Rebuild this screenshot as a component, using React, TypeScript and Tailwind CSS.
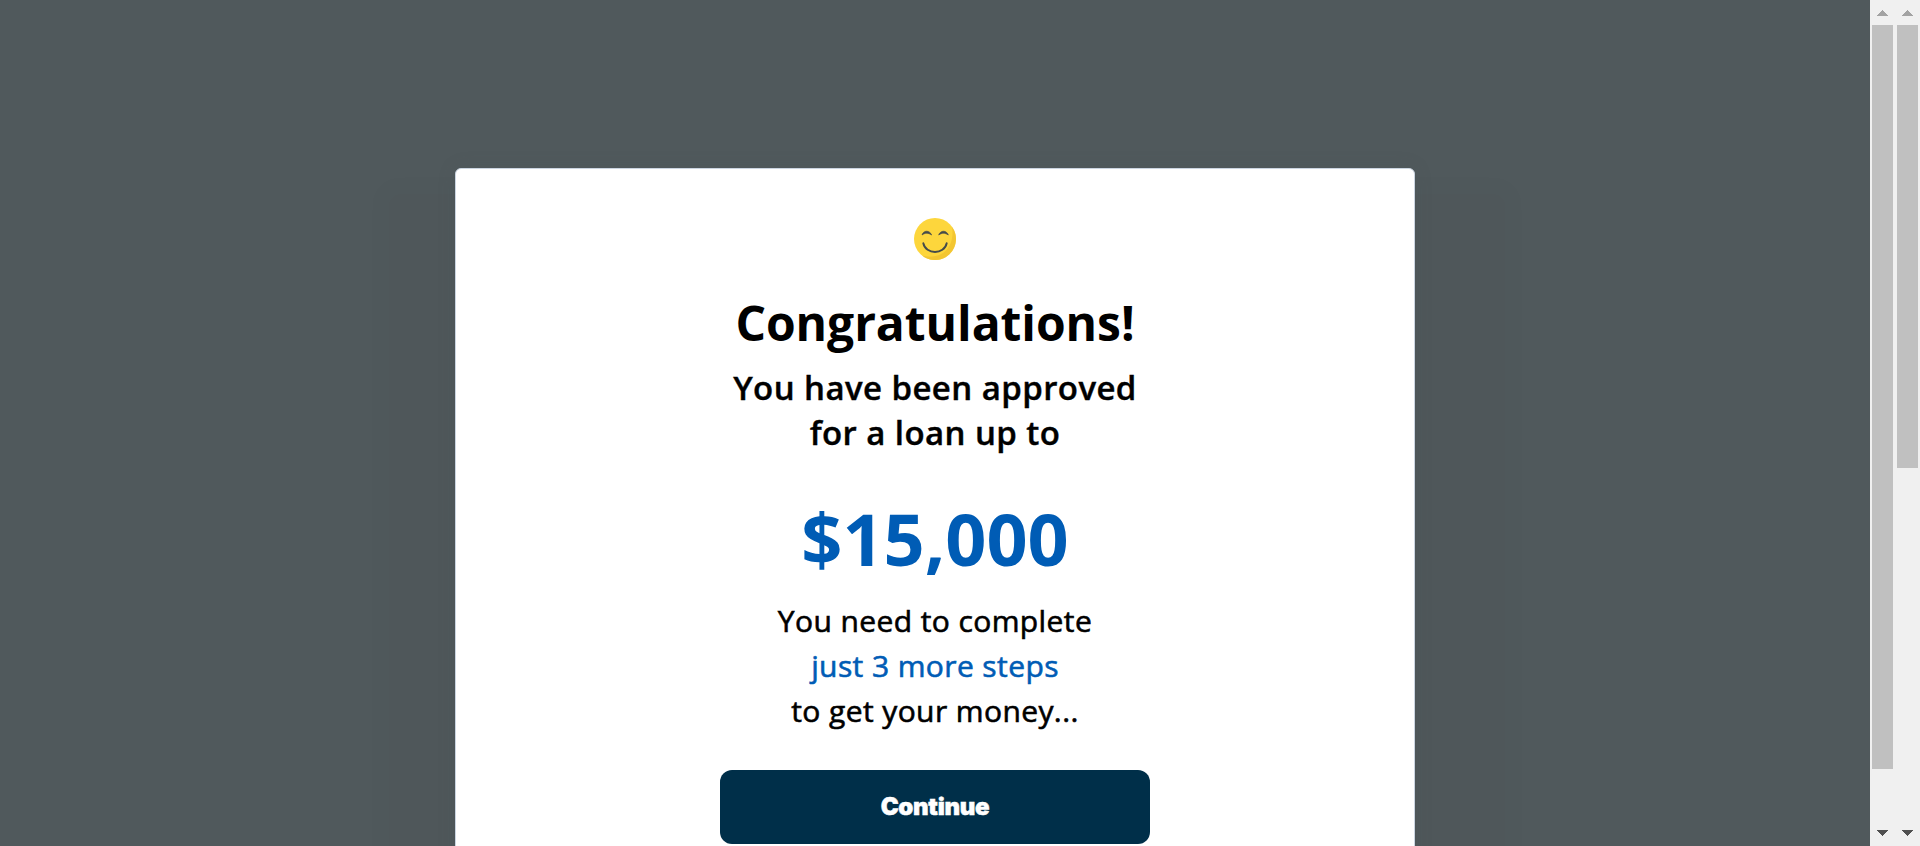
import type { ReactNode } from "react";

function Smile() {
  return (
    <svg className="h-[42px] w-[42px]" viewBox="0 0 42 42" fill="none">
      <circle cx="21" cy="21" r="21" fill="#fdd63c" />
      <path d="M38 8.800A21 21 0 0 1 8 37.600C16 40 26 38.500 32 32.500C38 26 39.500 17 38 8.800Z" fill="#efc02f" opacity=".75" />
      <path d="M8 17C9.500 12 15.700 12 17.600 17C14.500 14.700 11 14.700 8 17ZM24.700 17C26.400 12 32.600 12 34.300 17C31.200 14.700 27.700 14.700 24.700 17Z" fill="#454b4b" stroke="#454b4b" strokeWidth=".7" strokeLinejoin="round" />
      <path d="M9.300 25.200C11.800 37 30.200 37 32.700 25.200" stroke="#454b4b" strokeWidth="1.900" strokeLinecap="round" />
    </svg>
  );
}

function Scrollbar({ children }: { children: ReactNode }) {
  return (
    <div className="flex h-full w-[25px] flex-col items-center bg-[#f0f0f0]">
      <div className="flex h-[25px] w-full shrink-0 justify-center pt-[10px]">
        <svg className="h-[6px] w-[11px]" viewBox="0 0 11 6" shapeRendering="crispEdges">
          <path d="M0 6L5.500 0L11 6Z" fill="#a3a3a3" />
        </svg>
      </div>
      {children}
      <div className="mt-auto flex h-[16px] w-full shrink-0 justify-center">
        <svg className="h-[6px] w-[11px]" viewBox="0 0 11 6" shapeRendering="crispEdges">
          <path d="M0 0L5.500 6L11 0Z" fill="#505050" />
        </svg>
      </div>
    </div>
  );
}

export default function App() {
  return (
    <div className="flex h-[846px] w-full overflow-hidden bg-[#50595c] font-['Open_Sans',sans-serif] text-black">
      <main className="flex min-w-0 flex-1 justify-center overflow-hidden pt-[168px]">
        <section className="flex h-[760px] w-[960px] shrink-0 flex-col items-center rounded-[6px] border border-[#cbd5e1] bg-white pt-[49px] text-center shadow-[0_0_18px_rgba(74,84,86,0.15),12px_104px_12px_92px_rgba(0,0,0,0.01)]">
          <Smile />
          <h1 className="mt-[30px] text-[48px] leading-[66px] font-bold tracking-[-0.06px]">Congratulations!</h1>
          <h2 className="mt-[9px] text-[33px] leading-[45px] font-semibold tracking-[0.42px] [-webkit-text-stroke:0.4px_currentColor]">
            You have been approved
            <br />
            for a loan up to
          </h2>
          <p className="mt-[34px] text-[72px] leading-[98px] font-bold text-[#005cb5]">$15,000</p>
          <p className="mt-[11px] text-[30px] leading-[45px] font-normal tracking-[0.4px] [-webkit-text-stroke:0.6px_currentColor]">
            You need to complete
            <br />
            <span className="text-[#005cb5]">just 3 more steps</span>
            <br />
            to get your money...
          </p>
          <button className="mt-[37px] h-[74px] w-[430px] shrink-0 rounded-[12px] bg-[#002f49] font-['Inter',sans-serif] text-[24px] leading-[30px] font-black tracking-[-0.3px] text-white [-webkit-text-stroke:0.5px_white]">
            Continue
          </button>
        </section>
      </main>
      <Scrollbar>
        <div className="h-[744px] w-[21px] bg-[#c0c0c0]" />
      </Scrollbar>
      <Scrollbar>
        <div className="h-[443px] w-[21px] bg-[#c0c0c0]" />
      </Scrollbar>
    </div>
  );
}
